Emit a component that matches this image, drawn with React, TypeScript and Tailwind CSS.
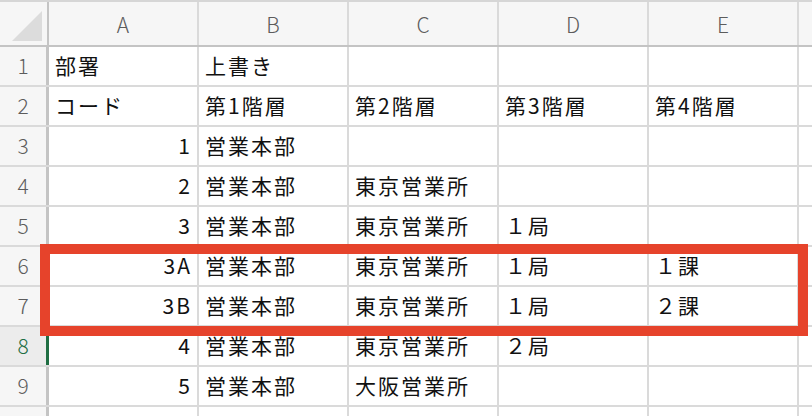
import React from 'react';

const cols = ['A', 'B', 'C', 'D', 'E'];

// 各行: [A, B, C, D, E]
const rows: string[][] = [
    ['部署', '上書き', '', '', ''],
    ['コード', '第1階層', '第2階層', '第3階層', '第4階層'],
    ['1', '営業本部', '', '', ''],
    ['2', '営業本部', '東京営業所', '', ''],
    ['3', '営業本部', '東京営業所', '１局', ''],
    ['3A', '営業本部', '東京営業所', '１局', '１課'],
    ['3B', '営業本部', '東京営業所', '１局', '２課'],
    ['4', '営業本部', '東京営業所', '２局', ''],
    ['5', '営業本部', '大阪営業所', '', ''],
    ['6', '営業本部', '大阪営業所', '', ''],
];

const isCode = (v: string) => /^[0-9]+[A-Z]?$/.test(v);

export default function App() {
    return (
        <div
            className="relative w-[812px] h-[416px] overflow-hidden bg-white"
            style={{ fontFamily: '"Noto Sans CJK JP", "Noto Sans", sans-serif' }}
        >
            {/* Column header */}
            <div className="flex h-[47px] border-t-2 border-b-2 border-t-[#d6d6d6] border-b-[#c4c4c4] bg-[#f6f6f6]">
                <div className="w-[49px] shrink-0 border-r-2 border-[#c4c4c4] flex items-end justify-end pr-[3px] pb-[2px]">
                    <svg width="32" height="32" viewBox="0 0 32 32">
                        <polygon points="0,30 30,0 30,30" fill="#dcdcdc" />
                    </svg>
                </div>
                {cols.map(c => (
                    <div
                        key={c}
                        className="w-[150px] shrink-0 border-r-2 border-[#dadada] flex items-center justify-center text-[21px] font-light text-[#5c5c5c] pt-[3px]"
                    >
                        {c}
                    </div>
                ))}
                <div className="flex-1" />
            </div>

            {/* Rows */}
            {rows.map((r, i) => {
                const active = i === 7;
                return (
                    <div key={i} className="flex h-[40px] border-b-2 border-[#dadada]">
                        <div
                            className={`w-[49px] shrink-0 border-r-[3px] flex items-center justify-center text-[21px] font-light ${active
                                ? 'bg-[#ececec] border-[#1f6e43] text-[#1f6e43]'
                                : 'bg-[#f6f6f6] border-[#c4c4c4] text-[#5c5c5c]'
                                }`}
                        >
                            {i + 1}
                        </div>
                        {r.map((v, j) => (
                            <div
                                key={j}
                                className={`w-[150px] shrink-0 border-r-2 border-[#dadada] flex items-center text-[21px] tracking-[2px] text-[#111] whitespace-nowrap ${j === 0 && isCode(v) ? 'justify-end pr-[5px]' : 'justify-start pl-[6px]'
                                    }`}
                            >
                                {v}
                            </div>
                        ))}
                        <div className="flex-1" />
                    </div>
                );
            })}

            {/* Highlight */}
            <div className="absolute left-[40px] top-[244px] w-[768px] h-[92px] border-[10px] border-[#e6432b]" />
        </div>
    );
}
